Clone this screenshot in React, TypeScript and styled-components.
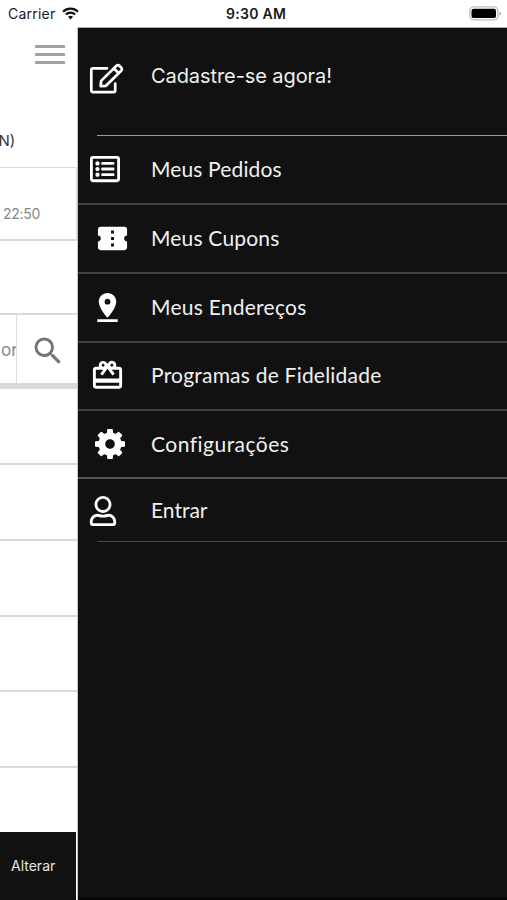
import React from 'react';
import styled, { createGlobalStyle } from 'styled-components';
import { FaRegListAlt, FaRegUser } from 'react-icons/fa';
import { MdConfirmationNumber, MdPinDrop, MdRedeem, MdSearch } from 'react-icons/md';

const GlobalStyle = createGlobalStyle`
  * { box-sizing: border-box; }
  body { margin: 0; background: #fff; font-family: Inter, sans-serif; overflow: hidden; }
  svg { display: block; flex: none; }
`;

const Screen = styled.div`
  width: 507px;
  height: 900px;
  display: grid;
  grid-template: 28px 872px / 78px 429px;
  overflow: hidden;
`;

const StatusBar = styled.header`
  grid-column: 1 / -1;
  display: grid;
  grid-template-columns: 226px 1fr 38px;
  align-items: center;
  background: linear-gradient(90deg, #fff 78px, #aaa 78px) bottom / 100% 1px no-repeat #fff;
  color: #1a1a1a;
  line-height: 27px;
  padding-bottom: 1px;
`;

const Carrier = styled.div`
  display: flex;
  align-items: center;
  gap: 7px;
  padding-left: 8px;
  font-size: 14px;
  letter-spacing: 0.22px;
`;

const Clock = styled.div`
  font-size: 14px;
  font-weight: 600;
  letter-spacing: 0.3px;
`;

const Page = styled.main`
  display: flex;
  flex-direction: column;
  background: #fff;
  border-right: 1px solid #c4c4c4;
  overflow: hidden;
`;

const PageHeader = styled.div`
  height: 140px;
  flex: none;
  border-bottom: 1px solid #ddd;
`;

const MenuButton = styled.div`
  display: flex;
  flex-direction: column;
  gap: 5px;
  width: 30px;
  margin: 17px 0 0 35px;
`;

const MenuBar = styled.span`
  height: 3px;
  background: #a0a0a0;
`;

const StoreName = styled.div`
  margin-top: 67px;
  margin-left: -1.5px;
  font-size: 15px;
  line-height: 20px;
  color: #333;
`;

const Cell = styled.div<{ $h: number; $line?: number }>`
  height: ${(p) => p.$h}px;
  flex: none;
  border-bottom: ${(p) => p.$line ?? 2}px solid #dadada;
`;

const HoursCell = styled(Cell)`
  border-right: 1px solid #ddd;
  padding: 36px 0 0 3px;
  font-size: 14px;
  line-height: 20px;
  letter-spacing: -0.25px;
  color: #858585;
`;

const SearchCell = styled(Cell)`
  display: flex;
`;

const SearchInput = styled.div`
  width: 17px;
  border-right: 1px solid #ddd;
  padding: 25px 0 0 1px;
  font-size: 17px;
  line-height: 20px;
  color: #888;
  overflow: hidden;
`;

const SearchButton = styled.div`
  padding: 18px 0 0 13px;
  color: #757575;
`;

const Footer = styled.div`
  flex: 1;
  width: 76px;
  background: #111;
  color: #e6e6e6;
  padding: 24px 0 0 11px;
  font-size: 14px;
  line-height: 20px;
`;

const Drawer = styled.nav`
  background: #111;
  border-bottom: 3px solid #080808;
  overflow: hidden;
`;

const Row = styled.div<{ $h: number }>`
  height: ${(p) => p.$h}px;
  display: grid;
  grid-template-columns: 73px 1fr;
  align-items: center;
`;

const IconSlot = styled.div<{ $x: number; $dy?: number }>`
  padding-left: ${(p) => p.$x}px;
  margin-top: ${(p) => p.$dy ?? 0}px;
  color: #fff;
`;

const Label = styled.span<{ $gap: number; $plain?: boolean; $lift?: number }>`
  font-family: ${(p) => (p.$plain ? 'Inter' : 'Lato')}, sans-serif;
  font-size: ${(p) => (p.$plain ? 20 : 21)}px;
  line-height: 28px;
  letter-spacing: ${(p) => p.$gap}px;
  padding-bottom: ${(p) => p.$lift ?? 2}px;
  color: #f0f0f0;
  white-space: nowrap;
`;

const Divider = styled.div<{ $inset?: boolean; $color?: string; $size?: number }>`
  height: ${(p) => p.$size ?? 2}px;
  margin-left: ${(p) => (p.$inset ? 19 : 0)}px;
  background: ${(p) => p.$color ?? '#414141'};
`;

const WifiIcon = () => (
  <svg width="17" height="13" viewBox="0 0 17 13" fill="none" stroke="#111" strokeWidth="2.2">
    <path d="M1 4.7C5.2.6 11.8.6 16 4.7" />
    <path d="M3.8 7.5c2.7-2.6 6.7-2.6 9.4 0" />
    <path d="M6 9.8c1.5-1.3 3.5-1.3 5 0l-2.5 2.6z" fill="#111" stroke="none" />
  </svg>
);

const BatteryIcon = () => (
  <svg width="33" height="15" viewBox="0 0 33 15">
    <rect x=".9" y=".9" width="28" height="13" rx="4" fill="#fff" stroke="#bdbdbd" strokeWidth="1.4" />
    <rect x="2.5" y="2.7" width="24.5" height="9.4" rx="2.2" fill="#000" />
    <path d="M30.5 5.5c2 .7 2 3.3 0 4z" fill="#aaa" />
  </svg>
);

const EditIcon = () => (
  <svg width="36" height="32" viewBox="0 0 36 32" fill="none" stroke="#fff" strokeWidth="2.7" strokeLinejoin="round" strokeLinecap="round">
    <path d="M18 5.3H3.9a1.6 1.6 0 0 0-1.6 1.6v20.6a1.6 1.6 0 0 0 1.6 1.6h20.7a1.6 1.6 0 0 0 1.6-1.6v-7" />
    <path d="M11.7 23.2l.4-5.3L27.2 3c1.1-1.1 2.3-1.1 3.4 0l1.6 1.6c1 1 1 2.2 0 3.2L17 22.8z" />
    <path d="M25.2 5.8l4 4" />
  </svg>
);

const teeth = [0, 45, 90, 135, 180, 225, 270, 315];

const GearIcon = () => (
  <svg width="30" height="30" viewBox="-15 -15 30 30">
    {teeth.map((angle) => (
      <path key={angle} d="M-3.2-9L-2.8-14.2q.1-.8.8-.8h4q.7 0 .8.8L3.2-9z" fill="#fff" transform={`rotate(${angle})`} />
    ))}
    <circle r="8.2" fill="none" stroke="#fff" strokeWidth="6.8" />
  </svg>
);

export default function App() {
  return (
    <>
      <GlobalStyle />
      <Screen>
        <StatusBar>
          <Carrier>Carrier <WifiIcon /></Carrier>
          <Clock>9:30 AM</Clock>
          <BatteryIcon />
        </StatusBar>
        <Page>
          <PageHeader>
            <MenuButton><MenuBar /><MenuBar /><MenuBar /></MenuButton>
            <StoreName>N)</StoreName>
          </PageHeader>
          <HoursCell $h={73}>22:50</HoursCell>
          <Cell $h={74} />
          <SearchCell $h={74} $line={6}>
            <SearchInput>or</SearchInput>
            <SearchButton><MdSearch size={36} /></SearchButton>
          </SearchCell>
          <Cell $h={76} />
          <Cell $h={76} />
          <Cell $h={76} />
          <Cell $h={75} />
          <Cell $h={76} />
          <Cell $h={64} $line={0} />
          <Footer>Alterar</Footer>
        </Page>
        <Drawer>
          <Row $h={107}>
            <IconSlot $x={11} $dy={-5}><EditIcon /></IconSlot>
            <Label $gap={-0.08} $plain $lift={11}>Cadastre-se agora!</Label>
          </Row>
          <Divider $inset $color="#999" $size={1} />
          <Row $h={67}>
            <IconSlot $x={12} $dy={-1}><FaRegListAlt size={30} /></IconSlot>
            <Label $gap={0.13}>Meus Pedidos</Label>
          </Row>
          <Divider />
          <Row $h={67}>
            <IconSlot $x={16.5}><MdConfirmationNumber size={35} /></IconSlot>
            <Label $gap={0.18}>Meus Cupons</Label>
          </Row>
          <Divider />
          <Row $h={67}>
            <IconSlot $x={11.5} $dy={-1}><MdPinDrop size={35} /></IconSlot>
            <Label $gap={0.25}>Meus Endereços</Label>
          </Row>
          <Divider />
          <Row $h={66}>
            <IconSlot $x={12} $dy={-1}><MdRedeem size={35} /></IconSlot>
            <Label $gap={0.22}>Programas de Fidelidade</Label>
          </Row>
          <Divider />
          <Row $h={66}>
            <IconSlot $x={17}><GearIcon /></IconSlot>
            <Label $gap={0.48} $lift={1}>Configurações</Label>
          </Row>
          <Divider $color="#555" />
          <Row $h={62}>
            <IconSlot $x={10} $dy={1}><FaRegUser size={30} /></IconSlot>
            <Label $gap={0} $lift={0}>Entrar</Label>
          </Row>
          <Divider $inset $size={1} $color="#4a4a4a" />
        </Drawer>
      </Screen>
    </>
  );
}
